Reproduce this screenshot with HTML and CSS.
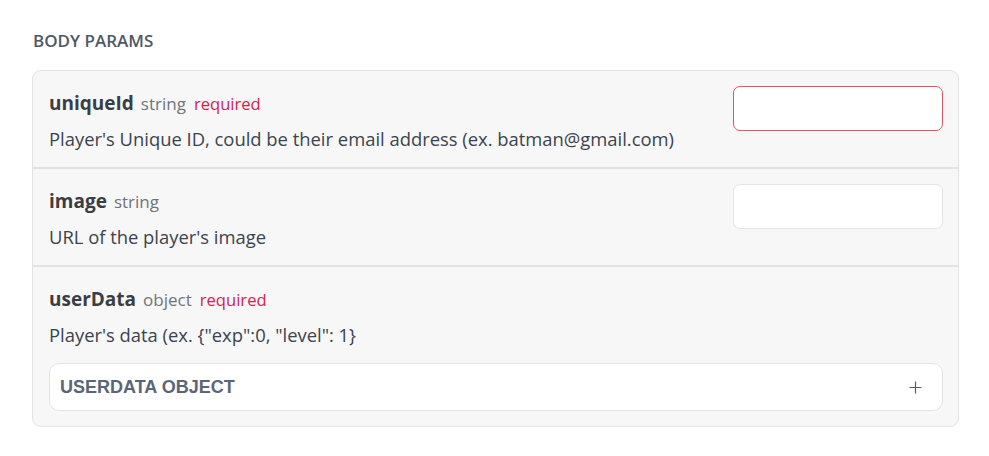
FILE: index.html
```html
<!DOCTYPE html>
<html>
<head>
<meta charset="utf-8">
<link rel="stylesheet" href="styles.css">
</head>
<body>
<div class="wrap">
  <h2 class="title">BODY PARAMS</h2>
  <div class="card">
    <div class="row">
      <div class="info">
        <div class="head"><span class="name">uniqueId</span><span class="type">string</span><span class="req">required</span></div>
        <div class="desc">Player's Unique ID, could be their email address (ex. batman@gmail.com)</div>
      </div>
      <input class="field invalid" type="text">
    </div>
    <div class="row">
      <div class="info">
        <div class="head"><span class="name">image</span><span class="type">string</span></div>
        <div class="desc">URL of the player's image</div>
      </div>
      <input class="field" type="text">
    </div>
    <div class="row last">
      <div class="info">
        <div class="head"><span class="name">userData</span><span class="type">object</span><span class="req">required</span></div>
        <div class="desc">Player's data (ex. {"exp":0, "level": 1}</div>
        <div class="obj"><span class="obj-label">USERDATA OBJECT</span><svg class="plus" width="13" height="13" viewBox="0 0 13 13"><path d="M6.5 0.5v12M0.5 6.5h12" stroke="#555e6b" stroke-width="1.2" fill="none"/></svg></div>
      </div>
    </div>
  </div>
</div>
</body>
</html>
```
FILE: styles.css
```css
* { box-sizing: border-box; }
html, body { margin: 0; padding: 0; background: #fff; }
body { font-family: "Open Sans", "Noto Sans", sans-serif; color: #3b4350; }
.wrap { padding: 28px 31px 0 32px; }
.title {
  margin: 0 0 16px 1px;
  font-size: 17px;
  font-weight: 600;
  line-height: 26px;
  height: 26px;
  color: #4f5864;
}
.card {
  background: #f7f7f7;
  border: 1px solid #e2e2e2;
  border-radius: 9px;
  width: 927px;
}
.row {
  display: flex;
  justify-content: space-between;
  align-items: flex-start;
  padding: 15px 15px 15px 16px;
  border-bottom: 2px solid #e3e3e3;
}
.row.last { border-bottom: none; }
.info { flex: 1; }
.head {
  margin-top: 4px;
  height: 26px;
  line-height: 26px;
  display: flex;
  align-items: baseline;
}
.name { font-size: 19px; font-weight: 700; color: #3a3e44; }
.type { font-size: 17px; color: #6e747c; margin-left: 7px; }
.req { font-size: 16.6px; color: #d6214d; margin-left: 8px; }
.desc {
  margin-top: 10px;
  height: 26px;
  font-size: 18.4px;
  line-height: 26px;
  color: #3b4350;
  white-space: nowrap;
}
.field {
  display: block;
  width: 210px;
  height: 45px;
  border: 1px solid #e4e4e4;
  border-radius: 7px;
  background: #fff;
  outline: none;
  margin: 0;
  padding: 0 10px;
}
.field.invalid { border-color: #e45561; }
.obj {
  margin-top: 15px;
  height: 48px;
  background: #fff;
  border: 1px solid #e4e4e4;
  border-radius: 10px;
  display: flex;
  align-items: center;
  justify-content: space-between;
  padding: 0 20px 0 10px;
}
.obj-label {
  font-family: "Liberation Sans", Arial, sans-serif;
  font-weight: 700;
  font-size: 18px;
  line-height: 22px;
  color: #5b6578;
}
.plus { display: block; margin-top: 1px; }
```
